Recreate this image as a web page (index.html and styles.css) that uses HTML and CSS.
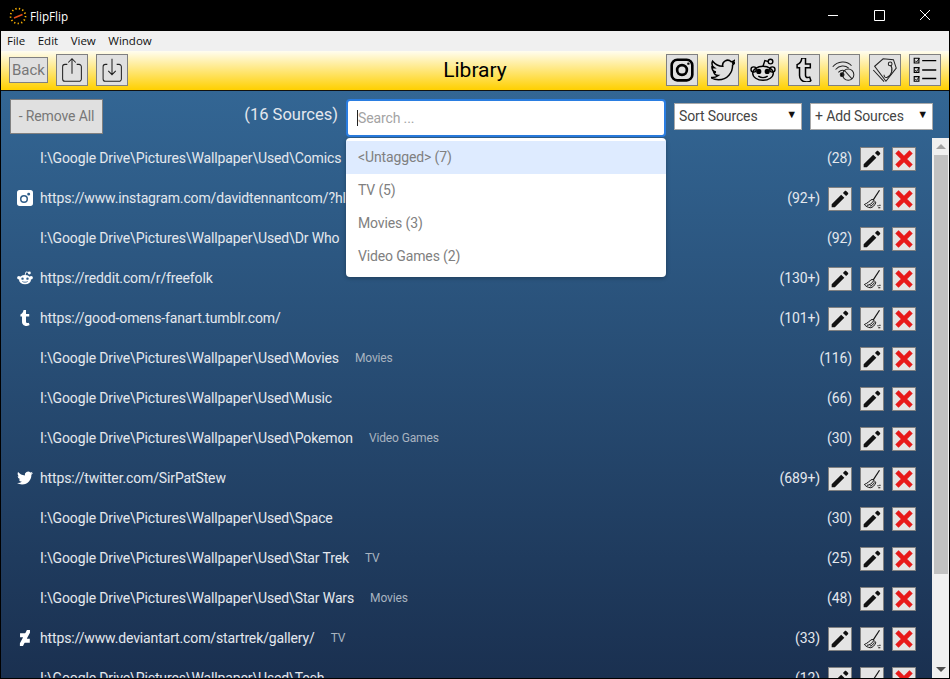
FILE: index.html
```html
<!DOCTYPE html>
<html lang="en">
<head>
  <meta charset="UTF-8" />
  <title>FlipFlip</title>
  <link rel="stylesheet" href="styles.css">
</head>
<body>
  <svg class="defs" width="0" height="0">
    <defs>
      <symbol id="pencil" viewBox="0 0 24 24"><path d="M2 18.200V22h3.800L17.200 10.600l-3.800-3.800L2 18.200zM21.600 6.200c.5-.5.5-1.100 0-1.600l-2.200-2.200c-.5-.5-1.100-.5-1.600 0L15.500 4.700l3.800 3.800 2.300-2.300z"/></symbol>
      <symbol id="cross" viewBox="0 0 24 24"><path d="M3.500 3.500 20.500 20.500M20.500 3.500 3.500 20.500" fill="none" stroke="#e81a1a" stroke-width="5.500"/></symbol>
      <symbol id="broom" viewBox="0 0 24 24">
        <g fill="none" stroke="#111" stroke-width="1.200">
          <path d="M21 1.500 13.500 13" stroke-width="1.400"/>
          <path d="M12 12.500C9 14 7 17 2.800 18.600 5 21 7 22 10 22.500c3-.5 5-2.500 6.500-6-1-2-2.500-3.500-4.500-4z"/>
          <path d="M6 19.500c3 0 6-2 8-5.500M9.500 20.500c2 0 4-2 5.300-4.500"/>
          <path d="M18.500 20h1.500M21.500 19v1.500M19.500 22.500h2.500" stroke-width="1.300"/>
        </g>
      </symbol>
      <symbol id="insta" viewBox="0 0 24 24"><path fill="#fff" fill-rule="evenodd" d="M4 0h16a4 4 0 0 1 4 4v16a4 4 0 0 1-4 4H4a4 4 0 0 1-4-4V4a4 4 0 0 1 4-4zm6.500 7.500a6 6 0 1 0 0 12 6 6 0 0 0 0-12zm0 2.200a3.800 3.800 0 1 1 0 7.600 3.800 3.800 0 0 1 0-7.600zM17.500 4a2.200 2.200 0 1 0 0 4.400 2.200 2.200 0 0 0 0-4.400z"/></symbol>
      <symbol id="reddit" viewBox="0 0 24 24">
        <g fill="#fff">
          <ellipse cx="12" cy="14.500" rx="9" ry="7"/>
          <circle cx="2.800" cy="11.500" r="2.600"/><circle cx="21.200" cy="11.500" r="2.600"/>
          <circle cx="18.500" cy="4.500" r="2.200"/>
          <path d="M12 8 13.500 2.800l5 1.200" fill="none" stroke="#fff" stroke-width="1.300"/>
        </g>
        <circle cx="8.300" cy="13" r="1.800" fill="#2e5c89"/><circle cx="15.700" cy="13" r="1.800" fill="#2e5c89"/>
        <path d="M8 17.200c2.200 1.500 5.800 1.500 8 0" fill="none" stroke="#2e5c89" stroke-width="1.200"/>
      </symbol>
      <symbol id="tumblr" viewBox="0 0 24 24"><path d="M14.563 24c-5.093 0-7.031-3.756-7.031-6.411V9.747H5.116V6.648c3.630-1.313 4.512-4.596 4.710-6.469C9.840.051 9.941 0 9.999 0h3.517v6.114h4.801v3.633h-4.820v7.470c.016 1.001.375 2.371 2.207 2.371h.090c.631-.020 1.486-.205 1.936-.419l1.156 3.425c-.436.636-2.400 1.374-4.156 1.404h-.178z"/></symbol>
      <symbol id="twitter" viewBox="0 0 24 24"><path d="M23.953 4.570a10 10 0 0 1-2.825.775 4.958 4.958 0 0 0 2.163-2.723c-.951.555-2.005.959-3.127 1.184a4.920 4.920 0 0 0-8.384 4.482C7.690 8.095 4.067 6.130 1.640 3.162a4.822 4.822 0 0 0-.666 2.475c0 1.710.870 3.213 2.188 4.096a4.904 4.904 0 0 1-2.228-.616v.060a4.923 4.923 0 0 0 3.946 4.827 4.996 4.996 0 0 1-2.212.085 4.936 4.936 0 0 0 4.604 3.417 9.867 9.867 0 0 1-6.102 2.105c-.390 0-.779-.023-1.170-.067a13.995 13.995 0 0 0 7.557 2.209c9.053 0 13.998-7.496 13.998-13.985 0-.210 0-.420-.015-.630A9.935 9.935 0 0 0 24 4.590z"/></symbol>
      <symbol id="deviant" viewBox="0 0 24 24"><path d="M19.207 4.794l.230-.430V0h-4.370l-.436.440-2.058 3.925-.646.436H4.580v5.993h4.040l.360.436-4.400 8.390-.232.430V24h4.370l.438-.440 2.060-3.925.645-.436h7.340v-5.993h-4.040l-.360-.438 4.400-8.388z"/></symbol>
    </defs>
  </svg>

  <div class="app">
    <div class="titlebar">
      <svg class="logo" viewBox="0 0 18 18" width="18" height="18">
        <circle cx="9" cy="9" r="7.500" fill="none" stroke="#ffb400" stroke-width="1.700" stroke-dasharray="1.300 2.300"/>
        <path d="M5 11 13.500 7.500" stroke="#e8501a" stroke-width="1.500"/>
      </svg>
      <span class="app-name">FlipFlip</span>
      <div class="win-btns">
        <svg viewBox="0 0 46 31" width="46" height="31"><path d="M18 15.500h10" stroke="#fff"/></svg>
        <svg viewBox="0 0 46 31" width="46" height="31"><path d="M18.500 10.500h10v10h-10z" fill="none" stroke="#fff"/></svg>
        <svg viewBox="0 0 46 31" width="46" height="31"><path d="M18 10 28 20M28 10 18 20" stroke="#fff"/></svg>
      </div>
    </div>

    <div class="menubar">
      <span>File</span><span>Edit</span><span>View</span><span>Window</span>
    </div>

    <div class="toolbar">
      <div class="tool-group">
        <button class="btn-back">Back</button>
        <button class="tool">
          <svg viewBox="0 0 32 32" width="32" height="32" class="line thin"><path d="M11 10H8.500a2.500 2.500 0 0 0-2.500 2.500v13A2.500 2.500 0 0 0 8.500 28h15a2.500 2.500 0 0 0 2.500-2.500v-13a2.500 2.500 0 0 0-2.500-2.500H21M16 20V4M12 8l4-4 4 4"/></svg>
        </button>
        <button class="tool">
          <svg viewBox="0 0 32 32" width="32" height="32" class="line thin"><path d="M11 10H9a2.500 2.500 0 0 0-2.500 2.500v13A2.500 2.500 0 0 0 9 28h14.500a2.500 2.500 0 0 0 2.500-2.500v-13a2.500 2.500 0 0 0-2.500-2.500H21M16 4v17M12 17l4 4 4-4"/></svg>
        </button>
      </div>
      <h1>Library</h1>
      <div class="tool-group tool-right">
        <button class="tool">
          <svg viewBox="0 0 32 32" width="32" height="32"><g fill="none" stroke="#000" stroke-width="2.800"><rect x="5" y="5" width="22" height="22" rx="6"/><circle cx="16" cy="16" r="5.200"/></g><circle cx="22.800" cy="9.200" r="1.300"/></svg>
        </button>
        <button class="tool">
          <svg viewBox="-3 -3 30 30" width="30" height="30" class="line"><use href="#twitter" width="24" height="24"/></svg>
        </button>
        <button class="tool">
          <svg viewBox="0 0 32 32" width="30" height="30" class="line"><ellipse cx="16" cy="19.500" rx="11" ry="7.500"/><circle cx="6" cy="15.500" r="2.800"/><circle cx="26" cy="15.500" r="2.800"/><circle cx="24" cy="7" r="2.500"/><path d="M16 12 18 6l4 1"/><path d="M11 22.500c3 2 7 2 10 0"/><circle cx="11.500" cy="17.500" r="2" fill="#000"/><circle cx="20.500" cy="17.500" r="2" fill="#000"/></svg>
        </button>
        <button class="tool">
          <svg viewBox="0 -1 24 26" width="26" height="26" class="line"><use href="#tumblr" width="24" height="24"/></svg>
        </button>
        <button class="tool">
          <svg viewBox="0 0 32 32" width="30" height="30" class="line thin"><path d="M4 12.500c5-6 15-7 20-1M7 15.500c4-4.500 10-5 14-1.500M10 18.500c2-2 5-2.500 7-1.500"/><circle cx="14" cy="21" r="2" fill="#000"/><circle cx="20.500" cy="21" r="6"/><path d="M16.500 16.500 24.500 25.500"/></svg>
        </button>
        <button class="tool">
          <svg viewBox="0 0 32 32" width="30" height="30" class="line thin"><path d="M5 12 14 4l11 1 3 9-11 14L5 12zM3.500 16 15 28.500"/><circle cx="21.500" cy="9.500" r="2"/><path d="M22 11c3 4 1 11-4 13-2 .5-3-1-3-3"/></svg>
        </button>
        <button class="tool">
          <svg viewBox="0 0 32 32" width="30" height="30" class="line"><path d="M13 6h15M13 16h15M13 25h15"/><path stroke-width="1.200" d="M4.500 3.500h5v5h-5zM4.500 13.500h5v5h-5zM4.500 23h5v5h-5z"/><path stroke-width="1" d="M5.500 6l1.500 1.500L10 3.500M5.500 16l1.500 1.500 3-4M5.500 25.500 7 27l3-4"/></svg>
        </button>
      </div>
    </div>

    <div class="content">
      <div class="controls">
        <button class="remove-all">- Remove All</button>
        <span class="source-count">(16 Sources)</span>
        <div class="search">
          <div class="search-box">
            <i class="caret"></i><input type="text" placeholder="Search ...">
          </div>
          <ul class="tag-menu">
            <li class="active">&lt;Untagged&gt; (7)</li>
            <li>TV (5)</li>
            <li>Movies (3)</li>
            <li>Video Games (2)</li>
          </ul>
        </div>
        <div class="picker picker-sort">Sort Sources</div>
        <div class="picker picker-add">+ Add Sources</div>
      </div>

      <div class="source-list">
        <div class="row"><span class="ico"></span><span class="url">I:\Google Drive\Pictures\Wallpaper\Used\Comics</span><span class="count">(28)</span><button class="act"><svg><use href="#pencil"/></svg></button><button class="act"><svg><use href="#cross"/></svg></button></div>
        <div class="row"><span class="ico"><svg><use href="#insta"/></svg></span><span class="url">https://www.instagram.com/davidtennantcom/?hl=en</span><span class="count">(92+)</span><button class="act"><svg><use href="#pencil"/></svg></button><button class="act"><svg><use href="#broom"/></svg></button><button class="act"><svg><use href="#cross"/></svg></button></div>
        <div class="row"><span class="ico"></span><span class="url">I:\Google Drive\Pictures\Wallpaper\Used\Dr Who</span><span class="count">(92)</span><button class="act"><svg><use href="#pencil"/></svg></button><button class="act"><svg><use href="#cross"/></svg></button></div>
        <div class="row"><span class="ico"><svg><use href="#reddit"/></svg></span><span class="url">https://reddit.com/r/freefolk</span><span class="count">(130+)</span><button class="act"><svg><use href="#pencil"/></svg></button><button class="act"><svg><use href="#broom"/></svg></button><button class="act"><svg><use href="#cross"/></svg></button></div>
        <div class="row"><span class="ico"><svg class="white"><use href="#tumblr"/></svg></span><span class="url">https://good-omens-fanart.tumblr.com/</span><span class="count">(101+)</span><button class="act"><svg><use href="#pencil"/></svg></button><button class="act"><svg><use href="#broom"/></svg></button><button class="act"><svg><use href="#cross"/></svg></button></div>
        <div class="row"><span class="ico"></span><span class="url">I:\Google Drive\Pictures\Wallpaper\Used\Movies</span><span class="tag">Movies</span><span class="count">(116)</span><button class="act"><svg><use href="#pencil"/></svg></button><button class="act"><svg><use href="#cross"/></svg></button></div>
        <div class="row"><span class="ico"></span><span class="url">I:\Google Drive\Pictures\Wallpaper\Used\Music</span><span class="count">(66)</span><button class="act"><svg><use href="#pencil"/></svg></button><button class="act"><svg><use href="#cross"/></svg></button></div>
        <div class="row"><span class="ico"></span><span class="url">I:\Google Drive\Pictures\Wallpaper\Used\Pokemon</span><span class="tag">Video Games</span><span class="count">(30)</span><button class="act"><svg><use href="#pencil"/></svg></button><button class="act"><svg><use href="#cross"/></svg></button></div>
        <div class="row"><span class="ico"><svg class="white"><use href="#twitter"/></svg></span><span class="url">https://twitter.com/SirPatStew</span><span class="count">(689+)</span><button class="act"><svg><use href="#pencil"/></svg></button><button class="act"><svg><use href="#broom"/></svg></button><button class="act"><svg><use href="#cross"/></svg></button></div>
        <div class="row"><span class="ico"></span><span class="url">I:\Google Drive\Pictures\Wallpaper\Used\Space</span><span class="count">(30)</span><button class="act"><svg><use href="#pencil"/></svg></button><button class="act"><svg><use href="#cross"/></svg></button></div>
        <div class="row"><span class="ico"></span><span class="url">I:\Google Drive\Pictures\Wallpaper\Used\Star Trek</span><span class="tag">TV</span><span class="count">(25)</span><button class="act"><svg><use href="#pencil"/></svg></button><button class="act"><svg><use href="#cross"/></svg></button></div>
        <div class="row"><span class="ico"></span><span class="url">I:\Google Drive\Pictures\Wallpaper\Used\Star Wars</span><span class="tag">Movies</span><span class="count">(48)</span><button class="act"><svg><use href="#pencil"/></svg></button><button class="act"><svg><use href="#cross"/></svg></button></div>
        <div class="row"><span class="ico"><svg class="white"><use href="#deviant"/></svg></span><span class="url">https://www.deviantart.com/startrek/gallery/</span><span class="tag">TV</span><span class="count">(33)</span><button class="act"><svg><use href="#pencil"/></svg></button><button class="act"><svg><use href="#broom"/></svg></button><button class="act"><svg><use href="#cross"/></svg></button></div>
        <div class="row"><span class="ico"></span><span class="url">I:\Google Drive\Pictures\Wallpaper\Used\Tech</span><span class="count">(12)</span><button class="act"><svg><use href="#pencil"/></svg></button><button class="act"><svg><use href="#broom"/></svg></button><button class="act"><svg><use href="#cross"/></svg></button></div>
      </div>

      <div class="scrollbar">
        <i class="arrow up"></i>
        <div class="track"><div class="thumb"></div></div>
        <i class="arrow down"></i>
      </div>
    </div>
  </div>
</body>
</html>
```

FILE: styles.css
```css
* {
  box-sizing: border-box;
}
html, body {
  height: 100%;
}
body {
  margin: 0;
  overflow: hidden;
  font-family: Roboto, sans-serif;
}
.defs {
  display: block;
  height: 0;
}
.app {
  display: flex;
  flex-direction: column;
  height: 679px;
  border: 1px solid #000;
  border-width: 0 1px 1px;
  background: #000;
}

/* window chrome */
.titlebar {
  flex: none;
  height: 31px;
  display: flex;
  align-items: center;
  padding-left: 8px;
  background: #000;
  color: #fff;
}
.logo {
  margin-right: 3px;
}
.app-name {
  font: 11.700px "Open Sans", sans-serif;
}
.win-btns {
  margin-left: auto;
  display: flex;
  margin-right: 1px;
}
.menubar {
  flex: none;
  height: 20px;
  display: flex;
  align-items: center;
  gap: 12.500px;
  padding: 0 0 2px 6px;
  background: #f0f0f0;
  font: 11.500px "Open Sans", sans-serif;
  color: #111;
}

/* yellow toolbar */
.toolbar {
  flex: none;
  height: 40px;
  display: grid;
  grid-template-columns: 1fr auto 1fr;
  align-items: center;
  padding: 0 8px 1px;
  background: linear-gradient(#fffdf0, #ffd000);
  border-bottom: 1px solid #111;
}
.toolbar h1 {
  margin: 0;
  font-size: 21px;
  font-weight: 400;
  color: #000;
}
.tool-group {
  display: flex;
  align-items: center;
  gap: 8px;
}
.tool-right {
  justify-content: flex-end;
  gap: 8.500px;
}
.btn-back, .tool, .act, .remove-all {
  padding: 0;
  border: 1px solid #808080;
  background: #e0e0e0;
  font-family: Roboto, sans-serif;
  display: flex;
  align-items: center;
  justify-content: center;
}
.btn-back {
  width: 39px;
  height: 26px;
  font-size: 15px;
  color: #777;
}
.tool {
  width: 32px;
  height: 32px;
}
.line {
  fill: none;
  stroke: #000;
  stroke-width: 1.500;
}
.line.thin {
  stroke-width: 1.100;
  stroke: #222;
}

/* blue content area */
.content {
  flex: 1;
  min-height: 0;
  position: relative;
  display: flex;
  flex-direction: column;
  padding-right: 16px;
  background: linear-gradient(#336694, #1a3050);
  color: #e4e8ee;
}
.controls {
  flex: none;
  height: 47px;
  display: flex;
  align-items: flex-start;
  padding: 8px 16px 0 9px;
  margin-right: -16px;
}
.remove-all {
  width: 93px;
  height: 35px;
  padding-bottom: 2px;
  font-size: 14px;
  letter-spacing: -0.13px;
  color: #777;
}
.source-count {
  margin-left: auto;
  margin-top: 6px;
  font-size: 16.500px;
  color: #e4e8ee;
}
.search {
  position: relative;
  width: 320px;
  margin: 0 8px;
}
.search-box {
  height: 38px;
  display: flex;
  align-items: center;
  padding-left: 9px;
  background: #fff;
  border: 2px solid #2a7de1;
  border-radius: 4px;
}
.caret {
  width: 1px;
  height: 16px;
  background: #222;
}
.search-box input {
  flex: 1;
  min-width: 0;
  border: 0;
  outline: 0;
  padding: 0;
  font: 14px Roboto, sans-serif;
  letter-spacing: -0.13px;
}
.search-box input::placeholder {
  color: #a3a3a3;
}
.tag-menu {
  position: absolute;
  z-index: 2;
  top: 39px;
  left: 0;
  right: 0;
  margin: 0;
  padding: 3px 0 4px;
  list-style: none;
  background: #fff;
  border-radius: 4px;
  box-shadow: 0 1px 4px rgba(0, 0, 0, 0.3);
  font-size: 14px;
  letter-spacing: -0.13px;
  color: #808080;
}
.tag-menu li {
  height: 33px;
  line-height: 33px;
  padding-left: 12px;
}
.tag-menu .active {
  background: #deebff;
}
.picker {
  position: relative;
  height: 27px;
  margin-top: 4px;
  line-height: 25px;
  padding-left: 4px;
  background: #fff;
  border: 1px solid #a9a9a9;
  font-size: 14px;
  letter-spacing: -0.13px;
  color: #444;
}
.picker::after {
  content: "\25BC";
  position: absolute;
  right: 4px;
  top: -2px;
  font-size: 11px;
  color: #111;
}
.picker-sort {
  width: 128px;
  margin-right: 8px;
}
.picker-add {
  width: 123px;
}

/* source rows */
.source-list {
  flex: 1;
  min-height: 0;
  overflow: hidden;
}
.row {
  height: 40px;
  display: flex;
  align-items: center;
  padding-right: 17px;
  white-space: nowrap;
}
.ico {
  flex: none;
  width: 39px;
  display: flex;
  justify-content: center;
  padding-left: 12px;
  padding-right: 3px;
}
.ico svg {
  width: 16px;
  height: 16px;
  display: block;
}
.white {
  fill: #fff;
}
.url {
  font-size: 14px;
  letter-spacing: -0.13px;
}
.tag {
  margin-left: 16px;
  font-size: 12px;
  letter-spacing: -0.13px;
  color: #a9b4c0;
}
.count {
  margin-left: auto;
  margin-right: 8px;
  font-size: 14px;
  letter-spacing: -0.13px;
}
.act {
  flex: none;
  width: 24px;
  height: 24px;
  margin: 2px 0 0 8px;
  background: #e4e4e4;
}
.count + .act {
  margin-left: 0;
}
.act svg {
  width: 20px;
  height: 20px;
  fill: #111;
}

/* scrollbar */
.scrollbar {
  position: absolute;
  top: 47px;
  bottom: 0;
  right: 0;
  width: 17px;
  display: flex;
  flex-direction: column;
  align-items: center;
  background: #f0f0f0;
}
.track {
  flex: 1;
  width: 100%;
  padding: 0 1px 0 2px;
}
.thumb {
  height: 419px;
  background: #c1c1c1;
}
.arrow {
  flex: none;
  width: 0;
  height: 0;
  border-left: 5px solid transparent;
  border-right: 5px solid transparent;
}
.arrow.up {
  margin: 6px 0;
  border-bottom: 5px solid #a3a3a3;
}
.arrow.down {
  margin: 6px 0;
  border-top: 5px solid #505050;
}
```
